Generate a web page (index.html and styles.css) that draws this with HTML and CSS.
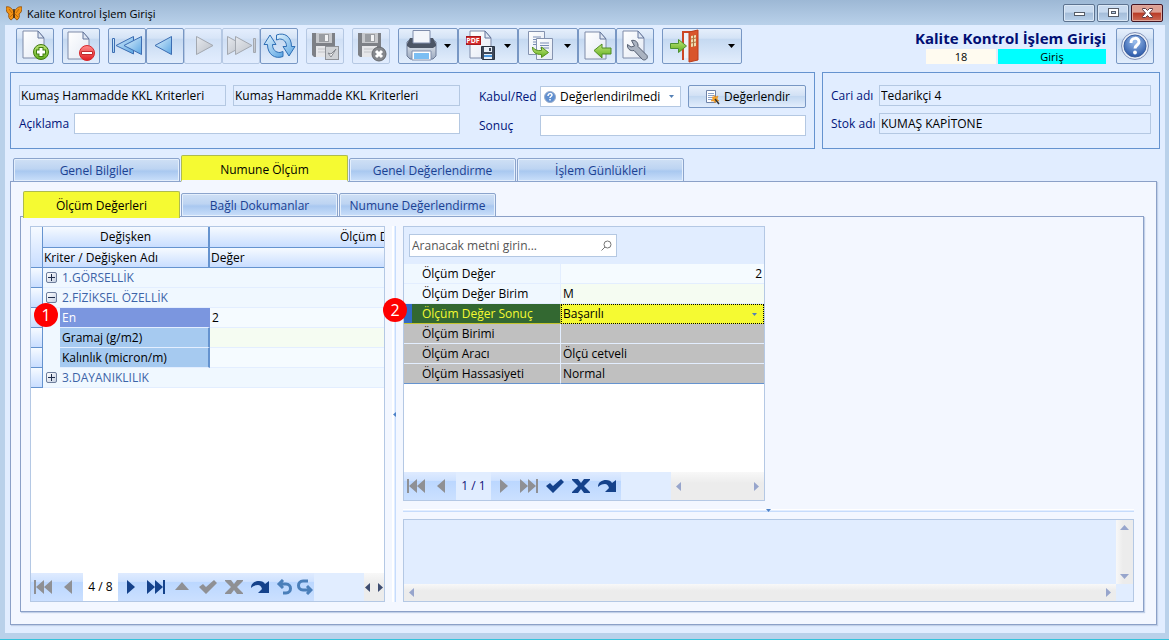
FILE: index.html
```html
<!DOCTYPE html>
<html lang="tr">
<head>
  <meta charset="UTF-8" />
  <meta name="viewport" content="width=device-width, initial-scale=1.0"/>
  <title>Kalite Kontrol İşlem Girişi</title>
  <link rel="stylesheet" href="styles.css">
</head>
<body>

  <!-- shared gradients and shapes -->
  <svg class="defs" width="0" height="0" aria-hidden="true">
    <defs>
      <linearGradient id="g-doc" x1="0" y1="0" x2="1" y2="1"><stop offset="0" stop-color="#fff"/><stop offset="1" stop-color="#e3e9f4"/></linearGradient>
      <linearGradient id="g-green" x1="0" y1="0" x2="0" y2="1"><stop offset="0" stop-color="#c0e57a"/><stop offset="1" stop-color="#5fae1c"/></linearGradient>
      <linearGradient id="g-red" x1="0" y1="0" x2="0" y2="1"><stop offset="0" stop-color="#ff8c8c"/><stop offset="1" stop-color="#e01d22"/></linearGradient>
      <linearGradient id="g-blue" x1="0" y1="0" x2="1" y2="1"><stop offset="0" stop-color="#e2f3fd"/><stop offset="1" stop-color="#5aa5e3"/></linearGradient>
      <linearGradient id="g-grey" x1="0" y1="0" x2="1" y2="1"><stop offset="0" stop-color="#e6e9ee"/><stop offset="1" stop-color="#b9bec6"/></linearGradient>
      <linearGradient id="g-steel" x1="0" y1="0" x2="0" y2="1"><stop offset="0" stop-color="#f4f6f9"/><stop offset="1" stop-color="#9ba9bf"/></linearGradient>
      <radialGradient id="g-help" cx=".5" cy=".3" r=".7"><stop offset="0" stop-color="#9dc0ee"/><stop offset="1" stop-color="#2957a8"/></radialGradient>
      <symbol id="doc" viewBox="0 0 24 29">
        <path d="M1 1h15l6 7v20H1z" fill="url(#g-doc)" stroke="#7e8ba8"/>
        <path d="M16 1v7h6z" fill="#dfe7f3" stroke="#65769c"/>
      </symbol>
      <symbol id="disk" viewBox="0 0 25 26">
        <path d="M1 1h23v24H3l-2-2z" fill="#7d8086"/>
        <path d="M5 1h16v10H5z" fill="#c6c8cc"/>
        <path d="M8 2h10v8H8z" fill="#9a9da2"/>
        <path d="M14 3h3v6h-3z" fill="#f2f3f5"/>
        <path d="M5 14h15v11H5z" fill="#e6e7ea"/>
        <path d="M7 17h11M7 20h11" stroke="#c2c4c8"/>
      </symbol>
      <symbol id="n-first" viewBox="0 0 20 16"><path d="M1 1h2v14H1zM11 1v14L3 8zM19 1v14L11 8z"/></symbol>
      <symbol id="n-prev" viewBox="0 0 10 16"><path d="M9 1v14L1 8z"/></symbol>
      <symbol id="n-next" viewBox="0 0 10 16"><path d="M1 1v14l8-7z"/></symbol>
      <symbol id="n-last" viewBox="0 0 20 16"><path d="M17 1h2v14h-2zM9 1v14l8-7zM1 1v14l8-7z"/></symbol>
      <symbol id="n-check" viewBox="0 0 20 16"><path d="M1 8l4-3 3 3 8-7 3 3L8 15z"/></symbol>
      <symbol id="n-cross" viewBox="0 0 20 16"><path d="M1 1h6l3 4 3-4h6v1l-6 6 6 6v1h-6l-3-4-3 4H1v-1l6-6-6-6z"/></symbol>
      <symbol id="n-redo" viewBox="0 0 20 16"><path d="M1 9C1 4 5 2 9 2c3 0 5 1 6 3l4-3v12H8l4-4c-1-3-2-4-4-4-3 0-5 1-7 3z"/></symbol>
      <symbol id="n-up" viewBox="0 0 16 16"><path d="M8 3l7 8H1z"/></symbol>
    </defs>
  </svg>

  <header class="titlebar">
    <svg class="app-icon" viewBox="0 0 16 16" width="16" height="16">
      <path d="M8 7C6 3 3 1 0 2c0 4 1 6 3 7-1 2 0 5 2 6 2-1 3-3 3-5 0 2 1 4 3 5 2-1 3-4 2-6 2-1 3-3 3-7-3-1-6 1-8 5z" fill="#f39314" stroke="#8a4a08" stroke-width=".8"/>
      <path d="M8 4v9" stroke="#3a2206" stroke-width="1.4"/>
      <path d="M3 4l3 4M13 4l-3 4M4 12l3-3M12 12l-3-3" stroke="#a75705" stroke-width=".7"/>
    </svg>
    <span class="caption">Kalite Kontrol İşlem Girişi</span>
    <div class="win-buttons">
      <button aria-label="Simge durumuna küçült"><svg width="13" height="12"><rect x="1.500" y="5.500" width="10" height="3" fill="#fff" stroke="#555c68"/></svg></button>
      <button aria-label="Ekranı kapla"><svg width="13" height="12"><rect x="1.500" y="1.500" width="10" height="8" fill="#fff" stroke="#555c68"/><rect x="4.500" y="4.500" width="4" height="2" fill="#b9cfe8" stroke="#555c68"/></svg></button>
      <button class="close" aria-label="Kapat"><svg width="13" height="12"><path d="M1.500 1.500h3l2 2 2-2h3v1l-3 3.500 3 3.500v1h-3l-2-2-2 2h-3v-1l3-3.500-3-3.500z" fill="#fff" stroke="#5c3a42"/></svg></button>
    </div>
  </header>

  <main class="window">

    <div class="toolbar">
      <div class="tool-group">
        <button class="tool" aria-label="Yeni"><svg width="36" height="34">
          <use href="#doc" x="5" y="1" width="24" height="29"/>
          <circle cx="24" cy="23" r="7.500" fill="url(#g-green)" stroke="#42790f"/>
          <path d="M24 18v10M19 23h10" stroke="#3f7d10" stroke-width="5"/><path d="M24 19v8M20 23h8" stroke="#fff" stroke-width="3"/>
        </svg></button>
      </div>
      <div class="tool-group">
        <button class="tool" aria-label="Sil"><svg width="36" height="34">
          <use href="#doc" x="4" y="2" width="24" height="29"/>
          <circle cx="24" cy="24" r="7.500" fill="url(#g-red)" stroke="#d8262b"/>
          <path d="M18.500 22.500h11v3h-11z" fill="#fff" stroke="#c02a2e"/>
        </svg></button>
      </div>
      <div class="tool-group">
        <button class="tool" aria-label="İlk"><svg width="36" height="34" fill="url(#g-blue)" stroke="#3c6db2">
          <path d="M3.500 9.500h2v14h-2zM24.500 7.500v17.500L7 16.500z"/><path d="M32.500 7.500v18L15 16.500z"/>
        </svg></button>
        <button class="tool" aria-label="Önceki"><svg width="36" height="34" fill="url(#g-blue)" stroke="#3c6db2"><path d="M24.500 7.500v18L8 16.500z"/></svg></button>
        <button class="tool" disabled aria-label="Sonraki"><svg width="36" height="34" fill="url(#g-grey)" stroke="#a3a8b0"><path d="M11.500 7.500v18L28 16.500z"/></svg></button>
        <button class="tool" disabled aria-label="Son"><svg width="36" height="34" fill="url(#g-grey)" stroke="#a3a8b0">
          <path d="M4.500 7.500v18L21 16.500z"/><path d="M12.500 7.500v18L29 16.500zM30.500 9.500h2v14h-2z"/>
        </svg></button>
        <button class="tool" aria-label="Yenile"><svg width="36" height="34" fill="url(#g-blue)" stroke="#2f6fb5">
          <path d="M3 15.500L9 6l6 9.500h-3.500c0 5 3 8 7.500 8l3-1v5c-8 3-15.500-2-15.500-12z"/>
          <path d="M34 17.500L28 27l-6-9.500h3.500c0-5-3-7.500-7-7.500l-3 1V6c8-3 15 1.500 15 11.500z"/>
        </svg></button>
      </div>
      <div class="tool-group">
        <button class="tool" disabled aria-label="Kaydet"><svg width="36" height="34">
          <use href="#disk" x="4" y="3" width="25" height="26"/>
          <rect x="18.500" y="17.500" width="13" height="13" fill="#cfd2d6" stroke="#8f9298"/>
          <path d="M21 24l3 4 5-8-5 5z" fill="#fff" stroke="#85888e"/>
        </svg></button>
      </div>
      <div class="tool-group">
        <button class="tool" disabled aria-label="Vazgeç"><svg width="36" height="34">
          <use href="#disk" x="4" y="3" width="25" height="26"/>
          <circle cx="26" cy="25" r="7" fill="#85888d" stroke="#66696e"/>
          <path d="M23 22l6 6M29 22l-6 6" stroke="#fff" stroke-width="3"/>
        </svg></button>
      </div>
      <div class="tool-group">
        <button class="tool drop" aria-label="Yazdır"><svg width="58" height="34">
          <path d="M8 13l4-3h21l4 3v14l-3 3H11l-3-3z" fill="url(#g-steel)" stroke="#6d7b96"/>
          <path d="M11 9h23l3 6v2l-3 2H11l-3-2v-2z" fill="#4c5565"/>
          <path d="M14 1.500h17V14H14z" fill="#f3f5fb" stroke="#7f8cab"/>
          <path d="M13 22h19v9H13z" fill="#fff" stroke="#8290ae"/><path d="M15 24h15v6H15z" fill="#7bbef3"/>
          <path class="caret" d="M45 15h7l-3.500 4z"/>
        </svg></button>
        <button class="tool drop" aria-label="PDF kaydet"><svg width="58" height="34">
          <use href="#doc" x="10" y="1" width="24" height="29"/>
          <rect x="7.500" y="7.500" width="14" height="8" fill="#d52b2e" stroke="#a51a1d"/>
          <text x="14" y="14" text-anchor="middle" class="pdf-text">PDF</text>
          <path d="M22.500 17.500h13v13h-12l-1-1z" fill="#3d4859" stroke="#283241"/>
          <path d="M25 18h8v5h-8zM25 25h8v5h-8z" fill="#e8eff8"/><path d="M30 19h2v3h-2z" fill="#3d4859"/><path d="M25 27h8" stroke="#4d99e0" stroke-width="2"/>
          <path class="caret" d="M45 15h7l-3.500 4z"/>
        </svg></button>
        <button class="tool drop" aria-label="Kopyala"><svg width="58" height="34">
          <path d="M9.500 2.500h16v23h-16z" fill="url(#g-doc)" stroke="#8593b0"/>
          <path d="M14 8h8M14 10.500h6M14 13h6M14 15.500h6" stroke="#7a8db4"/>
          <path d="M17.500 9.500h16v21h-16z" fill="url(#g-doc)" stroke="#8593b0"/>
          <path d="M21 14h9M21 16.500h9M21 19h9" stroke="#7a8db4"/>
          <path d="M13.500 18c2 3 5 4 9 3.500V18l7 5.500-7 5v-3c-6 0-9-2-9-7.500z" fill="url(#g-green)" stroke="#55901c"/>
          <path class="caret" d="M45 15h7l-3.500 4z"/>
        </svg></button>
        <button class="tool" aria-label="İçeri al"><svg width="36" height="34">
          <use href="#doc" x="5" y="2" width="24" height="29"/>
          <path d="M15 21.500l8-6.500v4h9v6h-9v4z" fill="url(#g-green)" stroke="#4f8c22"/>
        </svg></button>
        <button class="tool" aria-label="Ayarlar"><svg width="36" height="34">
          <use href="#doc" x="5" y="1" width="24" height="29"/>
          <path d="M14.500 11.500c4-1 7 2 6.500 6l9 9c1.500 3-2 5.500-4.500 4l-8.500-9c-4 1-7-2-6.500-6l3.500 2.500 3.500-1z" fill="#aab3c1" stroke="#535d70"/>
        </svg></button>
      </div>
      <div class="tool-group">
        <button class="tool exit" aria-label="Çıkış"><svg width="78" height="34">
          <path d="M20 31V3h10" fill="none" stroke="#cc4524" stroke-width="2"/>
          <path d="M21 4h6v25h-6z" fill="#edf1f7"/>
          <path d="M26 3l9-2v30l-9 2z" fill="#d9552b" stroke="#bb3d1c"/>
          <path d="M28 7l5-1v11l-5 1z" fill="#f1dcb0"/><path d="M30.500 6v12M28 10l5-1M28 14l5-1" stroke="#ae713d"/>
          <path d="M7.500 14.500h8v-4l8 6.500-8 6.500v-4h-8z" fill="url(#g-green)" stroke="#4c9130"/>
          <path class="caret" d="M65 15h7l-3.500 4z"/>
        </svg></button>
      </div>

      <div class="doc-info">
        <h1>Kalite Kontrol İşlem Girişi</h1>
        <div class="doc-state">
          <span class="doc-no">18</span>
          <span class="doc-mode">Giriş</span>
        </div>
      </div>
      <button class="tool" aria-label="Yardım"><svg width="36" height="34">
        <circle cx="18" cy="17" r="13.500" fill="#e9eef7" stroke="#8091b8"/>
        <circle cx="18" cy="17" r="11" fill="url(#g-help)" stroke="#3b5e9e"/>
        <path d="M14 14c0-6 8-6 8-1 0 3-4 3-4 6.500" fill="none" stroke="#fff" stroke-width="3"/><circle cx="18" cy="23.500" r="1.900" fill="#fff"/>
      </svg></button>
    </div>

    <section class="forms">
      <div class="box box-main">
        <div class="col-left">
          <div class="line">
            <input class="field kriter" readonly aria-label="Kriter" value="Kumaş Hammadde KKL Kriterleri">
            <input class="field" readonly aria-label="Kriter adı" value="Kumaş Hammadde KKL Kriterleri">
          </div>
          <div class="line">
            <label for="aciklama">Açıklama</label>
            <input class="field white" id="aciklama">
          </div>
        </div>
        <div class="col-right">
          <div class="line">
            <label for="kabul">Kabul/Red</label>
            <div class="combo">
              <svg width="12" height="12" viewBox="0 0 12 12"><circle cx="6" cy="6" r="5.500" fill="#5f8fd0" stroke="#9badca"/><path d="M4 5c0-3 4-3 4-1 0 1.500-2 1.500-2 3M6 8v1.500" fill="none" stroke="#fff" stroke-width="1.500"/></svg>
              <select id="kabul"><option>Değerlendirilmedi</option></select>
              <svg class="combo-arrow" width="5" height="3"><path d="M0 0h5L2.500 3z"/></svg>
            </div>
            <button class="evaluate">
              <svg width="16" height="16" viewBox="0 0 16 16"><path d="M2.500 1.500h9v12h-9z" fill="#fff" stroke="#6f83a8"/><path d="M4 4.500h6M4 6.500h6M4 8.500h4M4 10.500h4" stroke="#8ba2c9"/><path d="M10 6l1 2 3-1-1 3 2 2-3 0-1 2-1-2-3 0 2-2-1-2h2z" fill="#f7a62b" stroke="#d9821b" stroke-width=".5"/><path d="M11 10l4 5" stroke="#333" stroke-width="1.500"/></svg>
              Değerlendir
            </button>
          </div>
          <div class="line">
            <label for="sonuc">Sonuç</label>
            <input class="field white" id="sonuc">
          </div>
        </div>
      </div>

      <div class="box box-side">
        <div class="line">
          <label for="cari">Cari adı</label>
          <input class="field" id="cari" readonly value="Tedarikçi 4">
        </div>
        <div class="line">
          <label for="stok">Stok adı</label>
          <input class="field" id="stok" readonly value="KUMAŞ KAPİTONE">
        </div>
      </div>
    </section>

    <nav class="tabs">
      <button class="tab">Genel Bilgiler</button>
      <button class="tab active">Numune Ölçüm</button>
      <button class="tab">Genel Değerlendirme</button>
      <button class="tab">İşlem Günlükleri</button>
    </nav>

    <section class="page">
      <nav class="tabs sub">
        <button class="tab active">Ölçüm Değerleri</button>
        <button class="tab">Bağlı Dokumanlar</button>
        <button class="tab">Numune Değerlendirme</button>
      </nav>

      <div class="subpage">

        <div class="pane tree">
          <div class="tree-body">
            <table>
              <colgroup><col class="c-ind"><col class="c-indent"><col class="c-name"><col class="c-value"></colgroup>
              <thead>
                <tr class="bands"><th class="ind" rowspan="2"></th><th class="edge" colspan="2">Değişken</th><th>Ölçüm Değerleri</th></tr>
                <tr><th class="edge left" colspan="2">Kriter / Değişken Adı</th><th class="left">Değer</th></tr>
              </thead>
              <tbody>
                <tr class="group"><td class="ind"></td><td class="toggle"><button aria-label="Aç"><svg width="11" height="11"><path d="M2 5.500h7M5.500 2v7"/></svg></button></td><td colspan="2">1.GÖRSELLİK</td></tr>
                <tr class="group"><td class="ind"></td><td class="toggle"><button aria-label="Kapat"><svg width="11" height="11"><path d="M2 5.500h7"/></svg></button></td><td colspan="2">2.FİZİKSEL ÖZELLİK</td></tr>
                <tr class="selected"><td class="ind"></td><td class="indent"><span class="marker">1</span></td><td class="name">En</td><td class="value">2</td></tr>
                <tr class="odd"><td class="ind"></td><td class="indent"></td><td class="name">Gramaj (g/m2)</td><td class="value"></td></tr>
                <tr><td class="ind"></td><td class="indent"></td><td class="name">Kalınlık (micron/m)</td><td class="value"></td></tr>
                <tr class="group"><td class="ind"></td><td class="toggle"><button aria-label="Aç"><svg width="11" height="11"><path d="M2 5.500h7M5.500 2v7"/></svg></button></td><td colspan="2">3.DAYANIKLILIK</td></tr>
              </tbody>
            </table>
          </div>
          <div class="navigator">
            <div class="nav-buttons before">
              <button disabled aria-label="İlk kayıt"><svg width="20" height="16"><use href="#n-first"/></svg></button>
              <button disabled aria-label="Önceki kayıt"><svg width="10" height="16"><use href="#n-prev"/></svg></button>
            </div>
            <span class="counter">4 / 8</span>
            <div class="nav-buttons">
              <button class="step" aria-label="Sonraki kayıt"><svg width="10" height="16"><use href="#n-next"/></svg></button>
              <button aria-label="Son kayıt"><svg width="20" height="16"><use href="#n-last"/></svg></button>
              <button class="up" disabled aria-label="Düzenle"><svg width="16" height="16"><use href="#n-up"/></svg></button>
              <button disabled aria-label="Onayla"><svg width="20" height="16"><use href="#n-check"/></svg></button>
              <button disabled aria-label="İptal"><svg width="20" height="16"><use href="#n-cross"/></svg></button>
              <button aria-label="Yenile"><svg width="20" height="16"><use href="#n-redo"/></svg></button>
              <button class="thin" aria-label="Geri al"><svg width="17" height="16" viewBox="0 0 17 16"><path d="M7 1L3 5l4 4M3 5h7c6 0 6 9 0 9H7"/></svg></button>
              <button class="thin" aria-label="Yinele"><svg width="17" height="16" viewBox="0 0 17 16"><path d="M12 2H7C1 2 1 11 7 11h8M11 7l4 4-4 4"/></svg></button>
            </div>
            <div class="mini-scroll">
              <svg width="6" height="9"><path d="M5 0v9L0 4.500z"/></svg>
              <svg width="6" height="9"><path d="M1 0v9l5-4.500z"/></svg>
            </div>
          </div>
        </div>

        <div class="split-v"><svg width="3" height="5"><path d="M3 0v5L0 2.500z"/></svg></div>

        <div class="right">
          <div class="pane props">
            <div class="search">
              <input type="text" aria-label="Ara" placeholder="Aranacak metni girin...">
              <svg width="11" height="11"><circle cx="6.500" cy="4.500" r="3.500"/><path d="M4 7l-3.500 3.500"/></svg>
            </div>
            <table>
              <colgroup><col class="c-label"><col></colgroup>
              <tbody>
                <tr><th>Ölçüm Değer</th><td class="num">2</td></tr>
                <tr class="odd"><th>Ölçüm Değer Birim</th><td>M</td></tr>
                <tr class="current"><th><span class="marker">2</span><label for="olcum-sonuc">Ölçüm Değer Sonuç</label></th><td>
                  <div class="cell-combo">
                    <select id="olcum-sonuc"><option>Başarılı</option></select>
                    <svg class="combo-arrow" width="5" height="3"><path d="M0 0h5L2.500 3z"/></svg>
                  </div>
                </td></tr>
                <tr class="locked"><th>Ölçüm Birimi</th><td></td></tr>
                <tr class="locked"><th>Ölçüm Aracı</th><td>Ölçü cetveli</td></tr>
                <tr class="locked last"><th>Ölçüm Hassasiyeti</th><td>Normal</td></tr>
              </tbody>
            </table>
            <div class="props-space"></div>
            <div class="navigator">
              <div class="nav-buttons before">
                <button disabled aria-label="İlk"><svg width="20" height="16"><use href="#n-first"/></svg></button>
                <button disabled aria-label="Önceki"><svg width="10" height="16"><use href="#n-prev"/></svg></button>
              </div>
              <span class="counter plain">1 / 1</span>
              <div class="nav-buttons">
                <button class="step" disabled aria-label="Sonraki"><svg width="10" height="16"><use href="#n-next"/></svg></button>
                <button disabled aria-label="Son"><svg width="20" height="16"><use href="#n-last"/></svg></button>
                <button aria-label="Onayla"><svg width="20" height="16"><use href="#n-check"/></svg></button>
                <button aria-label="İptal"><svg width="20" height="16"><use href="#n-cross"/></svg></button>
                <button aria-label="Yenile"><svg width="20" height="16"><use href="#n-redo"/></svg></button>
              </div>
              <div class="scroll-h">
                <svg width="5" height="9"><path d="M5 0v9L0 4.500z"/></svg>
                <svg width="5" height="9"><path d="M0 0v9l5-4.500z"/></svg>
              </div>
            </div>
          </div>

          <div class="split-h"><svg width="5" height="3"><path d="M0 0h5L2.500 3z"/></svg></div>

          <div class="pane memo">
            <div class="memo-area"></div>
            <div class="scroll-v">
              <svg width="9" height="5"><path d="M0 5h9L4.500 0z"/></svg>
              <svg width="9" height="5"><path d="M0 0h9L4.500 5z"/></svg>
            </div>
            <div class="scroll-h">
              <svg width="5" height="9"><path d="M5 0v9L0 4.500z"/></svg>
              <svg width="5" height="9"><path d="M0 0v9l5-4.500z"/></svg>
            </div>
          </div>
        </div>

      </div>
    </section>
  </main>

</body>
</html>
```
FILE: styles.css
```css
* {
  box-sizing: border-box;
}

body {
  margin: 0;
  height: 100vh;
  display: flex;
  flex-direction: column;
  background: #b9d1ea;
  border-bottom: 1px solid #35c3dc;
  color: #000;
  font-family: "Open Sans", "Noto Sans", sans-serif;
  font-size: 12px;
  line-height: 16px;
  overflow: hidden;
}

button, input, select {
  font: inherit;
  color: inherit;
  margin: 0;
}

button {
  padding: 0;
}

svg {
  display: block;
  flex: none;
}

.defs {
  position: absolute;
}

/* title bar */

.titlebar {
  display: flex;
  align-items: center;
  height: 25px;
  padding: 0 6px;
  background: linear-gradient(#9db8d5, #b9d1ea);
}

.caption {
  flex: 1;
  margin-left: 5px;
  padding-top: 2px;
  font-size: 11px;
}

.win-buttons {
  display: flex;
  gap: 2px;
}

.win-buttons button {
  width: 32px;
  height: 18px;
  display: flex;
  align-items: center;
  justify-content: center;
  border: 1px solid #5d7390;
  border-radius: 2px;
  background: linear-gradient(#c8daef 45%, #a4bdd9 50%, #b9d1ea);
  box-shadow: inset 0 0 0 1px #dbe8f6;
}

.win-buttons .close {
  border-color: #431422;
  background: linear-gradient(#dda194 45%, #b93a25 50%, #cd6a55);
  box-shadow: inset 0 0 0 1px #dfa99e;
}

.window {
  flex: 1;
  min-height: 0;
  display: flex;
  flex-direction: column;
  margin: 0 4px 6px 5px;
  background: #e1edff;
}

/* toolbar */

.toolbar {
  display: flex;
  gap: 8px;
  padding: 3px 11px 0;
}

.tool-group {
  display: flex;
}

.tool {
  width: 38px;
  height: 36px;
  flex: none;
  border: 1px solid #7897c4;
  border-radius: 2px;
  background: linear-gradient(#e6effb, #d4e3f6 27%, #c5d9f1 30%, #e2edfc);
}

.tool:disabled {
  border-color: #b5c8e3;
  background: linear-gradient(#e4eefd, #d8e5f8 27%, #d0e0f5 30%, #e2edfe);
}

.tool.drop {
  width: 60px;
}

.tool.exit {
  width: 80px;
}

.caret {
  fill: #000;
}

.pdf-text {
  font-size: 7px;
  font-weight: bold;
  fill: #fff;
}

.doc-info {
  margin-left: auto;
  margin-right: 2px;
}

.doc-info h1 {
  margin: 0;
  font-size: 15px;
  line-height: 21px;
  text-align: right;
  white-space: nowrap;
  color: #000e73;
}

.doc-state {
  display: flex;
  justify-content: flex-end;
  gap: 2px;
  font-size: 11px;
  line-height: 15px;
  text-align: center;
}

.doc-no {
  width: 70px;
  background: #fffbf0;
}

.doc-mode {
  width: 108px;
  background: #0ff;
}

/* form boxes */

.forms {
  display: grid;
  grid-template-columns: 1fr 338px;
  gap: 7px;
  margin: 8px 5px 0;
}

.box {
  height: 77px;
  padding: 12px 8px;
  border: 1px solid #6593cf;
}

.box-main {
  display: flex;
  gap: 19px;
}

.col-left {
  flex: 1;
}

.col-right {
  width: 327px;
}

.col-right label {
  width: 61px;
}

.col-right .line {
  height: 23px;
  margin-bottom: 6px;
}

.line {
  display: flex;
  align-items: center;
  margin-bottom: 7px;
}

.line label {
  flex: none;
  color: #00147a;
}

.col-left label {
  width: 55px;
}

.box-side label {
  width: 48px;
}

.field {
  flex: 1;
  min-width: 0;
  height: 21px;
  padding: 0 1px;
  border: 1px solid #b4c8e2;
  background: #e1edff;
}

.field.white {
  background: #fff;
}

.field.kriter {
  flex: 0 0 207px;
  margin-right: 7px;
}

.combo {
  width: 141px;
  height: 21px;
  display: flex;
  align-items: center;
  gap: 4px;
  padding: 0 6px 0 3px;
  margin-right: 7px;
  border: 1px solid #b4c8e2;
  background: #fff;
}

.combo select, .cell-combo select {
  flex: 1;
  min-width: 0;
  padding: 0;
  border: 0;
  appearance: none;
  background: transparent;
}

.combo-arrow {
  fill: #5580b5;
}

.evaluate {
  flex: 1;
  height: 23px;
  display: flex;
  align-items: center;
  justify-content: center;
  gap: 4px;
  border: 1px solid #7897c4;
  border-radius: 2px;
  background: linear-gradient(#e8f0fb, #d2e1f5 45%, #c3d8f1 50%, #e2edfc);
}

/* tabs */

.tabs {
  display: flex;
  align-items: flex-end;
  gap: 1px;
  height: 27px;
  margin: 6px 0 -1px;
  padding-left: 8px;
  position: relative;
}

.tab {
  width: 167px;
  height: 24px;
  padding-top: 2px;
  border: 1px solid #8ba4cc;
  border-radius: 2px 2px 0 0;
  background: linear-gradient(#cfe0f5, #bdd4f2 45%, #a9c8f0 55%, #cadffa);
  box-shadow: inset 0 0 0 1px #e4effc;
  color: #1b4192;
}

.tab.active {
  height: 27px;
  padding-top: 3px;
  border: 1px solid #aebb4e;
  border-bottom: 2px solid #f3f7ff;
  background: #f5fa32;
  box-shadow: none;
  color: #000;
}

.tabs.sub {
  height: 26px;
  margin-top: 0;
  padding-left: 3px;
}

.sub .tab {
  width: 157px;
}

.sub .tab.active {
  height: 27px;
  margin-bottom: -1px;
  padding-top: 1px;
  border-bottom: 0;
}

.page {
  flex: 1;
  min-height: 0;
  display: flex;
  flex-direction: column;
  margin: 0 8px 8px 5px;
  padding: 9px 12px 12px 9px;
  border: 1px solid #8ba0c7;
  background: #f3f7ff;
  box-shadow: 1px 1px 1px #c1d0e8;
}

.subpage {
  flex: 1;
  min-height: 0;
  display: grid;
  grid-template-columns: 355px 18px 1fr;
  padding: 9px;
  border: 1px solid #8ba0c7;
  box-shadow: 1px 1px 1px #c1d0e8;
}

.pane {
  border: 1px solid #b4c8e4;
  background: #e1edff;
}

table {
  border-collapse: separate;
  border-spacing: 0;
  table-layout: fixed;
}

th, td {
  height: 20px;
  padding: 0 2px;
  line-height: 18px;
  font-weight: normal;
  white-space: nowrap;
}

/* criteria tree */

.tree {
  display: flex;
  flex-direction: column;
  min-height: 0;
}

.tree-body {
  flex: 1;
  min-height: 0;
  overflow: hidden;
  background: #fff;
}

.tree table {
  width: 530px;
}

.c-ind {
  width: 12px;
}

.c-indent {
  width: 17px;
}

.c-name {
  width: 150px;
}

.tree thead th {
  border-bottom: 1px solid #6593cf;
  background: linear-gradient(#f6faff, #c9deff);
}

.tree .bands th {
  height: 21px;
}

.tree th.left {
  text-align: left;
  padding-left: 1px;
}

.tree .edge {
  border-right: 2px solid #6593cf;
}

.tree .ind, .tree thead .ind {
  padding: 0;
  border-right: 1px solid #6593cf;
  border-bottom: 1px solid #6593cf;
  background: linear-gradient(#f6faff, #c9deff);
}

.tree tbody td {
  border-bottom: 1px solid #e3eeff;
  background: #f0f8ff;
}

.tree tbody td.ind {
  border-bottom-color: #6593cf;
  background: linear-gradient(#f6faff, #c9deff);
}

.tree .group td {
  color: #3c64a8;
}

.tree .toggle, .tree .indent {
  padding: 0 0 0 3px;
}

.tree .indent {
  border-bottom-color: #f0f8ff;
  position: relative;
}

.toggle button {
  display: block;
  border: 1px solid #6f7f9d;
  border-radius: 2px;
  width: 11px;
  height: 11px;
  background: linear-gradient(135deg, #fff, #c5d0e2);
}

.toggle svg {
  margin: -1px;
  stroke: #1f2d4a;
}

.tree tbody .name {
  border-right: 2px solid #6593cf;
  background: #a6caf0;
}

.tree tbody .selected .name {
  border-right-color: #7b96df;
  background: #7b96df;
  color: #fff;
}

.tree tbody .value {
  background: #f5fbff;
}

.tree tbody .odd .value {
  background: #f5fcf2;
}

.marker {
  position: absolute;
  z-index: 2;
  width: 24px;
  height: 24px;
  border-radius: 50%;
  background: #fe0000;
  color: #fff;
  font-size: 16px;
  line-height: 24px;
  text-align: center;
}

.tree .marker {
  left: -9px;
  top: -5px;
}

.props .marker {
  left: -21px;
  top: -6px;
}

/* record navigators */

.navigator {
  display: flex;
  height: 28px;
}

.nav-buttons {
  display: flex;
  align-items: center;
  gap: 6px;
  padding: 0 4px 0 8px;
  background: linear-gradient(#dfebff, #cfe2ff 30%, #bbd7ff 33%, #cbe0ff);
}

.nav-buttons.before {
  width: 52px;
  gap: 10px;
  padding: 0 0 0 2px;
}

.nav-buttons button {
  border: 0;
  background: none;
  fill: #15428b;
}

.nav-buttons button:disabled {
  fill: #8f9094;
}

.nav-buttons .step {
  width: 14px;
}

.nav-buttons .up {
  width: 20px;
}

.nav-buttons .up svg {
  margin: 0 auto;
}

.nav-buttons .thin {
  margin-right: -3px;
  stroke: #4a7fba;
  fill: none;
  stroke-width: 3;
}

.counter {
  width: 35px;
  line-height: 28px;
  text-align: center;
  background: #fff;
}

.counter.plain {
  background: #e1edff;
  color: #12127a;
}

.mini-scroll {
  display: flex;
  align-items: center;
  justify-content: space-between;
  width: 20px;
  margin-left: auto;
  padding: 0 1px;
  background: linear-gradient(#f8f8f8, #ececec 40%);
  fill: #3d4c70;
}

.scroll-h, .scroll-v {
  display: flex;
  align-items: center;
  justify-content: space-between;
  padding: 0 5px;
  background: linear-gradient(#f8f8f8, #ececec 40%);
  fill: #97a5cc;
}

/* splitters */

.split-v, .split-h {
  display: flex;
  align-items: center;
  justify-content: center;
  fill: #4d82c8;
}

.split-v {
  background: linear-gradient(90deg, #fff 2px, #e3eeff 2px 3px, #c6dcfc 3px) center / 4px 100% no-repeat;
}

.split-h {
  background: linear-gradient(#fff 1px, #e3eeff 1px 2px, #c6dcfc 2px) center / 100% 3px no-repeat;
}

.right {
  min-width: 0;
  min-height: 0;
  display: grid;
  grid-template-rows: 1fr 18px 83px;
}

/* measurement properties */

.props {
  width: 362px;
  min-height: 0;
  display: flex;
  flex-direction: column;
}

.search {
  display: flex;
  align-items: center;
  width: 208px;
  height: 23px;
  margin: 7px 5px;
  padding: 0 4px 0 2px;
  border: 1px solid #b4c8e2;
  background: #fff;
}

.search input {
  flex: 1;
  min-width: 0;
  padding: 0;
  border: 0;
}

.search input::placeholder {
  color: #555;
}

.search svg {
  fill: none;
  stroke: #777;
}

.props table {
  width: 100%;
}

.c-label {
  width: 157px;
}

.props th, .props td {
  border-bottom: 1px solid #e3eeff;
}

.props th {
  position: relative;
  padding-left: 18px;
  border-right: 1px solid #e3eeff;
  text-align: left;
  background: #f0f8ff;
}

.props td {
  background: #f5fbff;
}

.props .num {
  text-align: right;
}

.props .odd td {
  background: #f5fcf2;
}

.props .current th {
  border-color: #c3c42f;
  background: linear-gradient(90deg, #316ac5 8px, #336831 8px);
  color: #f5fa32;
}

.props .current td {
  padding: 0;
  border: 0;
  background: #f5fa32;
}

.cell-combo {
  display: flex;
  align-items: center;
  height: 20px;
  padding: 0 6px 0 1px;
  border: 1px dotted #000;
}

.props .locked th, .props .locked td {
  background: #c0c0c0;
}

.props .last th, .props .last td {
  border-bottom-color: #6593cf;
}

.props-space {
  flex: 1;
  background: #fff;
}

.props .scroll-h {
  width: 93px;
  margin-left: auto;
}

/* memo */

.memo {
  display: grid;
  grid-template-columns: 1fr 17px;
  grid-template-rows: 1fr 17px;
}

.scroll-v {
  flex-direction: column;
  padding: 5px 0;
  background: linear-gradient(90deg, #f8f8f8, #ececec 40%);
}
```
